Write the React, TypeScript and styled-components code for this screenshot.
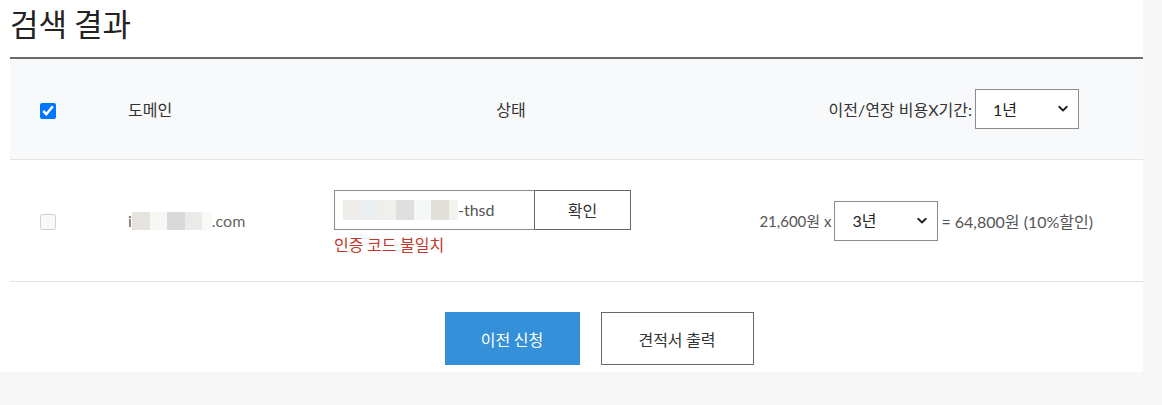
import React from "react";
import styled, { createGlobalStyle } from "styled-components";

const GlobalStyle = createGlobalStyle`
  html, body { margin: 0; padding: 0; background: #f7f7f7; }
  body { font-family: Lato, "Noto Sans CJK KR", sans-serif; color: #333; }
  * { box-sizing: border-box; }
`;

const Panel = styled.div`
  width: 1143px;
  height: 372px;
  background: #fff;
  padding-left: 10px;
  display: flex;
  flex-direction: column;
`;

const TitleBar = styled.div`
  height: 57px;
`;

const Title = styled.h1`
  margin: 0;
  font-size: 31px;
  line-height: normal;
  font-weight: 400;
  color: #222;
  font-family: "Noto Sans CJK KR", sans-serif;
`;

const Table = styled.div`
  border-top: 2px solid #6b6b6b;
  display: flex;
  flex-direction: column;
`;

const Row = styled.div<{ $head?: boolean }>`
  display: grid;
  grid-template-columns: 118px 206px 354px 1fr;
  align-items: center;
  height: ${(p) => (p.$head ? "101px" : "122px")};
  background: ${(p) => (p.$head ? "#f8f9fa" : "#fff")};
  border-bottom: 1px solid #e3e3e3;
  font-size: 16px;
  color: ${(p) => (p.$head ? "#333" : "#555")};
`;

const CheckCell = styled.div<{ $shift?: number }>`
  padding-left: 30px;
  padding-top: ${(p) => p.$shift ?? 0}px;
  display: flex;
  align-items: center;
`;

const Check = styled.input`
  width: 16px;
  height: 16px;
  margin: 0;
`;

const Cell = styled.div<{ $center?: boolean }>`
  display: flex;
  align-items: center;
  justify-content: ${(p) => (p.$center ? "center" : "flex-start")};
`;

const PriceCell = styled.div<{ $pr: number }>`
  display: flex;
  align-items: center;
  justify-content: flex-end;
  padding-right: ${(p) => p.$pr}px;
  gap: 3px;
  white-space: nowrap;
`;

const PriceText = styled.span<{ $size?: number }>`
  font-size: ${(p) => p.$size ?? 16}px;
`;

const Mosaic = styled.span<{ $c: string; $w: number; $h: number }>`
  display: inline-block;
  width: ${(p) => p.$w}px;
  height: ${(p) => p.$h}px;
  background: ${(p) => p.$c};
  vertical-align: middle;
`;

const Domain = styled.span`
  display: inline-flex;
  align-items: center;
  color: #666;
  font-size: 16px;
`;

const StatusBox = styled.div`
  display: flex;
  flex-direction: column;
  gap: 4px;
  margin-top: 2px;
`;

const InputGroup = styled.div`
  display: flex;
  height: 40px;
`;

const FakeInput = styled.div`
  width: 201px;
  height: 40px;
  border: 1px solid #8c8c8c;
  display: flex;
  align-items: center;
  padding-left: 8px;
  font-size: 16px;
  color: #555;
`;

const ConfirmBtn = styled.button`
  width: 97px;
  height: 40px;
  margin-left: -1px;
  border: 1px solid #666;
  background: #fff;
  font-family: "Noto Sans CJK KR", sans-serif;
  font-size: 16px;
  color: #333;
  padding: 0;
`;

const ErrorText = styled.div`
  color: #c0392b;
  font-size: 16px;
  font-family: "Noto Sans CJK KR", sans-serif;
  line-height: 20px;
`;

const SelectWrap = styled.div`
  position: relative;
  width: 104px;
  height: 40px;
`;

const Select = styled.select`
  appearance: none;
  -webkit-appearance: none;
  width: 100%;
  height: 100%;
  border: 1px solid #8c8c8c;
  border-radius: 0;
  background: #fff;
  padding-left: 17px;
  font-family: Lato, "Noto Sans CJK KR", sans-serif;
  font-size: 16px;
  color: #222;
  outline: none;
`;

const Chevron = styled.svg`
  position: absolute;
  right: 11px;
  top: 50%;
  transform: translateY(-50%);
  pointer-events: none;
`;

const Actions = styled.div`
  display: flex;
  justify-content: center;
  gap: 21px;
  padding-left: 45px;
  margin-top: 30px;
`;

const ActionBtn = styled.button<{ $primary?: boolean }>`
  height: 53px;
  width: ${(p) => (p.$primary ? "135px" : "153px")};
  border: ${(p) => (p.$primary ? "none" : "1px solid #666")};
  background: ${(p) => (p.$primary ? "#3490d8" : "#fff")};
  color: ${(p) => (p.$primary ? "#fff" : "#333")};
  font-family: "Noto Sans CJK KR", sans-serif;
  font-size: 16px;
  padding: 0;
`;

const YearSelect = ({ value }: { value: string }) => (
  <SelectWrap>
    <Select defaultValue={value}>
      <option>1년</option>
      <option>2년</option>
      <option>3년</option>
      <option>4년</option>
      <option>5년</option>
    </Select>
    <Chevron width="10" height="7" viewBox="0 0 10 7">
      <path d="M1.2 1.3 L5 5 L8.8 1.3" fill="none" stroke="#222" strokeWidth="1.9" strokeLinecap="round" strokeLinejoin="round" />
    </Chevron>
  </SelectWrap>
);

const domainBlocks: [string, number][] = [
  ["#e6e3df", 18],
  ["#f7f7f4", 17],
  ["#d8d9d8", 18],
  ["#ebeae8", 17],
  ["#f8f8f6", 10],
];

const codeBlocks: [string, number][] = [
  ["#efedea", 18],
  ["#eaf0f2", 17],
  ["#f1efed", 18],
  ["#dfe0de", 18],
  ["#f5f8f9", 17],
  ["#e0dfd9", 18],
  ["#f2f2ef", 9],
];

export default function App() {
  return (
    <>
      <GlobalStyle />
      <Panel>
        <TitleBar>
          <Title>검색 결과</Title>
        </TitleBar>
        <Table>
          <Row $head>
            <CheckCell $shift={4}>
              <Check type="checkbox" defaultChecked />
            </CheckCell>
            <Cell>도메인</Cell>
            <Cell $center>상태</Cell>
            <PriceCell $pr={64}>
              <PriceText>이전/연장 비용X기간:</PriceText>
              <YearSelect value="1년" />
            </PriceCell>
          </Row>
          <Row>
            <CheckCell $shift={2}>
              <Check type="checkbox" disabled />
            </CheckCell>
            <Cell>
              <Domain>
                i
                {domainBlocks.map(([c, w], i) => (
                  <Mosaic key={i} $c={c} $w={w} $h={18} />
                ))}
                .com
              </Domain>
            </Cell>
            <Cell>
              <StatusBox>
                <InputGroup>
                  <FakeInput>
                    {codeBlocks.map(([c, w], i) => (
                      <Mosaic key={i} $c={c} $w={w} $h={20} />
                    ))}
                    -thsd
                  </FakeInput>
                  <ConfirmBtn>확인</ConfirmBtn>
                </InputGroup>
                <ErrorText>인증 코드 불일치</ErrorText>
              </StatusBox>
            </Cell>
            <PriceCell $pr={50}>
              <PriceText $size={15}>21,600원 x</PriceText>
              <YearSelect value="3년" />
              <PriceText>= 64,800원 (10%할인)</PriceText>
            </PriceCell>
          </Row>
        </Table>
        <Actions>
          <ActionBtn $primary>이전 신청</ActionBtn>
          <ActionBtn>견적서 출력</ActionBtn>
        </Actions>
      </Panel>
    </>
  );
}
